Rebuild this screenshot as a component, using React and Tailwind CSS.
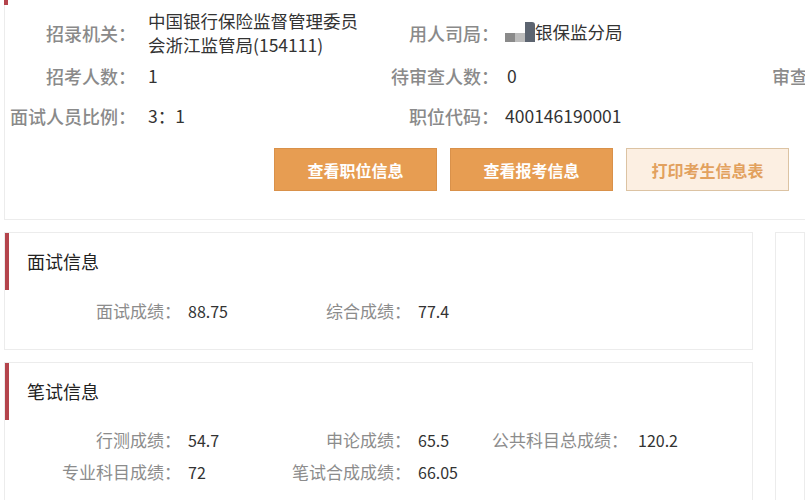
const font = { fontFamily: '"Noto Sans CJK SC", "Noto Sans", sans-serif' };

function TopRow({ children, className = "" }) {
  return <div className={`flex items-center ${className}`}>{children}</div>;
}

function TopLabel({ w, children }) {
  return (
    <div className={`${w} shrink-0 whitespace-nowrap text-right text-[18px] font-medium leading-6 text-[#8a8a8a]`}>
      {children}
    </div>
  );
}

function TopValue({ w, children }) {
  return <div className={`${w} shrink-0 whitespace-nowrap text-[17.5px] leading-6 text-[#333]`}>{children}</div>;
}

function Btn({ children, ghost }) {
  return (
    <button
      className={
        ghost
          ? "h-[43px] w-[163px] border border-[#dcc3a3] bg-[#fcefe2] text-[16px] font-bold text-[#e2a15e]"
          : "h-[43px] w-[163px] border border-[#d9914a] bg-[#e79d52] text-[16px] font-bold text-white"
      }
    >
      {children}
    </button>
  );
}

function Field({ label, value, lw, vw, pl = "pl-[7px]" }) {
  return (
    <div className="flex items-center">
      <div className={`${lw} shrink-0 whitespace-nowrap text-right text-[17px] leading-6 text-[#8c8c8c]`}>{label}</div>
      <div className={`${vw} ${pl} shrink-0 whitespace-nowrap text-[16px] leading-6 text-[#333]`}>{value}</div>
    </div>
  );
}

function Section({ title, children, className = "" }) {
  return (
    <div className={`border border-[#ececec] bg-white ${className}`}>
      <div className="flex h-[57px] items-center border-l-[4px] border-[#b4444c] pl-[18px]">
        <span className="text-[18px] text-[#222]">{title}</span>
      </div>
      {children}
    </div>
  );
}

export default function App() {
  return (
    <div className="h-[500px] w-[805px] overflow-hidden bg-white" style={font}>
      {/* top card */}
      <div className="relative ml-[4px] w-[900px] border-b border-l border-[#ececec] pb-[28px] pt-[9px]">
        <div className="absolute left-[-1px] top-0 h-[5px] w-[4px] bg-[#b4444c]" />
        <TopRow>
          <TopLabel w="w-[131px]">招录机关：</TopLabel>
          <TopValue w="w-[223px] pl-[12px]">
            中国银行保险监督管理委员
            <br />
            会浙江监管局(154111)
          </TopValue>
          <TopLabel w="w-[140px]">用人司局：</TopLabel>
          <TopValue w="w-[268px] pl-[6px]">
            <span className="inline-flex items-end align-middle">
              <span className="mb-[4px] inline-block h-[9px] w-[10px] bg-[#8a8a8a]" />
              <span className="mb-[4px] inline-block h-[9px] w-[10px] bg-[#bcbcbc]" />
              <span className="mb-[4px] inline-block h-[20px] w-[10px] rounded-tr-[3px] bg-[#5c6470]" />
            </span>
            银保监分局
          </TopValue>
        </TopRow>
        <TopRow className="mt-[7px]">
          <TopLabel w="w-[131px]">招考人数：</TopLabel>
          <TopValue w="w-[223px] pl-[12px]">1</TopValue>
          <TopLabel w="w-[140px]">待审查人数：</TopLabel>
          <TopValue w="w-[273px] pl-[8px]">0</TopValue>
          <div className="whitespace-nowrap text-[18px] font-medium leading-6 text-[#8a8a8a]">审查人数：</div>
        </TopRow>
        <TopRow className="mt-[16px]">
          <TopLabel w="w-[131px]">面试人员比例：</TopLabel>
          <TopValue w="w-[223px] pl-[12px]">3：1</TopValue>
          <TopLabel w="w-[140px]">职位代码：</TopLabel>
          <TopValue w="w-[268px] pl-[6px]">400146190001</TopValue>
        </TopRow>
        <div className="ml-[269px] mt-[20px] flex gap-[13px]">
          <Btn>查看职位信息</Btn>
          <Btn>查看报考信息</Btn>
          <Btn ghost>打印考生信息表</Btn>
        </div>
      </div>

      {/* lower area */}
      <div className="mt-[12px] flex pl-[4px]">
        <div className="flex w-[749px] flex-col gap-[12px]">
          <Section title="面试信息" className="h-[118px]">
            <div className="mt-[9px] flex">
              <Field label="面试成绩：" value="88.75" lw="w-[176px]" vw="w-[54px]" />
              <Field label="综合成绩：" value="77.4" lw="w-[176px]" vw="w-[60px]" />
            </div>
          </Section>
          <Section title="笔试信息" className="h-[160px]">
            <div className="mt-[8px] flex">
              <Field label="行测成绩：" value="54.7" lw="w-[176px]" vw="w-[54px]" />
              <Field label="申论成绩：" value="65.5" lw="w-[176px]" vw="w-[67px]" />
              <Field label="公共科目总成绩：" value="120.2" lw="w-[150px]" vw="w-[80px]" pl="pl-[10px]" />
            </div>
            <div className="mt-[8px] flex">
              <Field label="专业科目成绩：" value="72" lw="w-[176px]" vw="w-[54px]" />
              <Field label="笔试合成成绩：" value="66.05" lw="w-[176px]" vw="w-[60px]" />
            </div>
          </Section>
        </div>
        <div className="ml-[22px] h-[300px] flex-1 border border-[#ececec] bg-white" />
      </div>
    </div>
  );
}
